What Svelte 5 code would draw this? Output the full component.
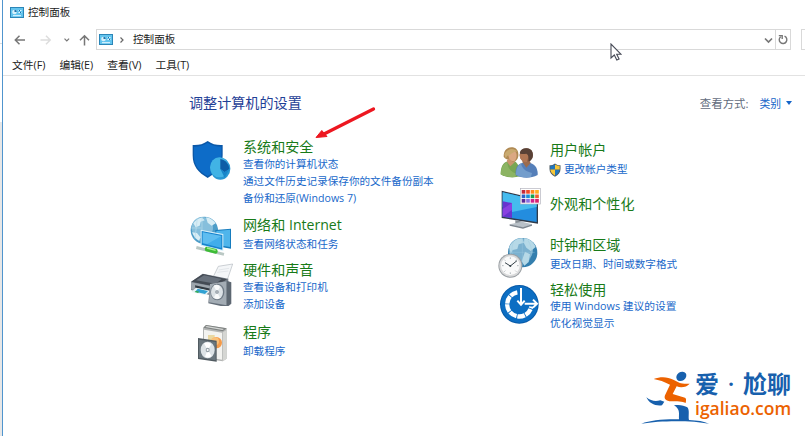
<script lang="ts">
  type Category = { icon: string; title: string; links: string[]; shield?: boolean }

  const left: Category[] = [
    { icon: 'security', title: '系统和安全', links: ['查看你的计算机状态', '通过文件历史记录保存你的文件备份副本', '备份和还原(Windows 7)'] },
    { icon: 'network', title: '网络和 Internet', links: ['查看网络状态和任务'] },
    { icon: 'hardware', title: '硬件和声音', links: ['查看设备和打印机', '添加设备'] },
    { icon: 'programs', title: '程序', links: ['卸载程序'] },
  ]
  const right: Category[] = [
    { icon: 'users', title: '用户帐户', links: ['更改帐户类型'], shield: true },
    { icon: 'appearance', title: '外观和个性化', links: [] },
    { icon: 'clock', title: '时钟和区域', links: ['更改日期、时间或数字格式'] },
    { icon: 'ease', title: '轻松使用', links: ['使用 Windows 建议的设置', '优化视觉显示'] },
  ]
  const menus = ['文件(F)', '编辑(E)', '查看(V)', '工具(T)']
  const swatches = ['#c22a3c', '#f04a28', '#ff8a1c', '#ffb01e', '#2a62c8', '#1890d8', '#16a050', '#f06030', '#5a2898', '#8a70e0', '#d0208c', '#d8206c']
  const viewBoxes: Record<string, string> = {
    security: '30 147 132 132',
    network: '30 12 132 132',
    hardware: '30 156 132 132',
    programs: '30 330 132 132',
    users: '21 21 132 132',
    appearance: '21 150 132 132',
    clock: '21 9 132 132',
    ease: '21 153 132 132',
  }
</script>

{#snippet panelIcon()}
  <svg class="panel-icon" viewBox="0 0 14 11">
    <rect x=".5" y=".5" width="13" height="10" fill="#62c4ee" stroke="#2b86b8" />
    <circle cx="4.5" cy="5" r="2.3" fill="#d9f1fb" />
    <path d="M4.5 5V2.7A2.3 2.3 0 0 1 6.8 5z" fill="#2372a8" />
    <path d="M8.5 3.5h3M8.5 5.5h3M3 8.7h8" stroke="#e9f8ff" />
    <path d="M9 3.5h1M10 5.5h1" stroke="#1d6ca4" />
  </svg>
{/snippet}

{#snippet categoryIcon(name: string)}
  <svg class="icon {name}" viewBox={viewBoxes[name]}>
    {#if name === 'security'}
      <path d="M83 153C70 163 54 166 38 165v31c0 33 17 52 45 68 28-16 45-35 45-68v-31c-16 1-32-2-45-12z" fill="#0b58a8" />
      <path d="M83 158c-12 8-26 12-41 12v27c0 29 15 46 41 61 26-15 41-32 41-61v-27c-15 0-29-4-41-12z" fill="#0d6cc8" />
      <ellipse cx="121" cy="236" rx="30" ry="33" fill="#2797d3" />
      <ellipse cx="118" cy="232" rx="28" ry="30" fill="#41b3e5" />
      <path d="M121 237V207c16 3 26 15 27 30l-14 10z" fill="#0c5da6" />
      <path d="M121 237l13 9 14-9-14 26z" fill="#1685c9" />
    {:else if name === 'network'}
      <circle cx="73" cy="61" r="41" fill="#4d9dc8" />
      <circle cx="67" cy="53" r="32" fill="#86bfdc" />
      <path d="M40 40c7-10 15-16 26-17l8 8-12 4-3 12-12 5zM78 22c12 1 22 8 29 18l-12 7-12-9zM36 67l15 2 10 13-3 11c-10-5-18-14-22-26z" fill="#d7edf5" />
      <path d="M34 54h30M52 24l-7 62M66 20v40" stroke="#b8dceb" stroke-width="2" />
      <path d="M106 60l47-4v60l-47-8z" fill="#167cbe" />
      <path d="M109 63l41-4v52l-41-7z" fill="#4fb5eb" />
      <path d="M62 59l68 13v51l-68-16z" fill="#d8f0fa" />
      <path d="M65 63l62 12v44l-62-15z" fill="#1683cd" />
      <path d="M68 67l56 11v36l-56-14z" fill="#41adeb" />
      <path d="M68 67l56 11-42 24-14-3z" fill="#77caf4" opacity=".55" />
      <path d="M50 108l83 21-2 8-83-20z" fill="#bac8c4" />
      <path d="M80 110l29 7c6 3 5 14-2 14l-29-7c-6-4-4-14 2-14z" fill="#3dbc36" />
      <path d="M81 114l26 7" stroke="#a8ef91" stroke-width="4" />
    {:else if name === 'hardware'}
      <path d="M98 204l17-35 43-7-17 50z" fill="#f4f6f8" stroke="#b4bac0" stroke-width="2" />
      <path d="M116 180l31-5m-35 12l33-4" stroke="#d9dee2" stroke-width="2" />
      <path d="M33 216l35-25 77 15v38l-37 16-75-20z" fill="#777f89" />
      <path d="M33 215l36-23 72 16-33 22z" fill="#444b54" />
      <path d="M48 211l24-15 53 11-18 14z" fill="#69727d" />
      <path d="M33 217l74 14v25l-73-18z" fill="#9da5ac" />
      <path d="M45 226l51 11v8l-50-12z" fill="#333b43" />
      <path d="M48 233l43 9-14 14-43-10z" fill="#e8f3f6" />
      <path d="M53 236l31 7-9 9-29-7z" fill="#31a1d2" />
      <path d="M48 242l10 3-4 4-10-3z" fill="#36ab58" />
      <path d="M90 223l50-11 14 5v64l-13 11-56-12z" fill="#646e79" />
      <path d="M90 222l50-8v72l-53-9z" fill="#a3acb4" />
      <path d="M140 214l13 4v60l-13 10z" fill="#5d6771" />
      <ellipse cx="112" cy="246" rx="21" ry="25" fill="#707b86" />
      <ellipse cx="111" cy="246" rx="18" ry="22" fill="#dce2e6" />
      <path d="M111 246l-10-19c7-5 15-3 19 4zM111 246l9 17c-6 6-13 5-18-1z" fill="#f9fafb" />
      <circle cx="111" cy="246" r="5" fill="#78838e" />
      <circle cx="111" cy="246" r="2" fill="#fff" />
    {:else if name === 'programs'}
      <path d="M69 354l9-9 62 10v91l-12 8-59-9z" fill="#b3b5b4" />
      <path d="M72 359l54 9v81l-54-9z" fill="#f3f3f0" />
      <path d="M70 353l8-8 62 10-12 9z" fill="#7f8382" />
      <path d="M76 351l4-3 52 9-5 3z" fill="#d6d8d6" />
      <path d="M128 367l12-7v86l-12 8z" fill="#d5d6d3" />
      <path d="M84 375h20v18H84z" fill="#e9d8a1" />
      <circle cx="109" cy="398" r="17" fill="#f49b4a" />
      <circle cx="105" cy="394" r="12" fill="#f9c078" />
      <path d="M54 384l56 8v63l-56-8z" fill="#505a60" />
      <path d="M57 389l50 7v55l-50-8z" fill="#6b777e" />
      <ellipse cx="83" cy="420" rx="21" ry="25" fill="#dde3e6" />
      <path d="M83 420l-11-20c8-4 17-2 22 3zM83 420l12 18c-8 6-15 5-20 2z" fill="#fff" />
      <ellipse cx="83" cy="420" rx="6" ry="7" fill="#96a1a8" />
      <circle cx="83" cy="420" r="3" fill="#fff" />
    {:else if name === 'users'}
      <path d="M32 118c0-24 7-36 23-39l22 1c9 8 13 25 13 44-20 6-43 4-58-6z" fill="#78a653" />
      <path d="M32 118c2-19 7-31 20-37 0 17 9 29 28 35l-4 10c-18 1-33-1-44-8z" fill="#8cb463" />
      <path d="M50 79l11 15 14-13-5-11H54z" fill="#c9966e" />
      <path d="M41 65c0-18 9-28 23-28 15 0 23 10 21 27-2 10-7 15-14 17-6-1-11-5-12-11-5 5-11 4-18-5z" fill="#b08a54" />
      <path d="M55 56c9-1 14-5 18-9 9 7 9 20 1 31-11 3-19-7-19-22z" fill="#dba882" />
      <path d="M43 58c8-17 27-21 40-8-15-2-19 12-31 12l-5 8z" fill="#c9aa70" />
      <path d="M77 120c-2-22 7-35 22-37l22 1c16 4 23 19 22 36-21 11-46 11-66 0z" fill="#557fb9" />
      <path d="M78 119c0-16 4-27 15-34 3 16 14 25 33 29l-3 12c-17 2-32 1-45-7z" fill="#739dcc" />
      <path d="M97 81l12 17 13-14-6-12h-18z" fill="#9b6c4f" />
      <circle cx="109" cy="60" r="20" fill="#79523e" />
      <path d="M89 58c8 0 14-4 18-9l9 9-4 23c-14 3-24-8-23-23z" fill="#b07654" />
      <path d="M89 55c2-11 10-16 22-15 13 0 20 11 17 25-2 7-6 13-11 14 1-12-2-20-8-23-7 1-14 2-20-1z" fill="#594136" />
    {:else if name === 'appearance'}
      <path d="M35 167l109 26v73L35 249z" fill="#303b49" />
      <path d="M38 172l102 24v65L38 245z" fill="#238ddf" />
      <path d="M38 172l102 24v20L66 231 38 216z" fill="#45bbee" />
      <path d="M38 199l28 5v45l-28-4z" fill="#6834ce" />
      <path d="M38 222l28-18v21l-28 20z" fill="#8941e0" />
      <path d="M76 256l23 4-2 11-21-4z" fill="#889097" />
      <path d="M59 268l37-8 30 8-27 10z" fill="#b9c1c8" />
      <path d="M59 268l40 9 27-9v4l-27 9-40-9z" fill="#7c858e" />
      <rect x="91" y="160" width="60" height="47" fill="#fff" stroke="#b2b2bc" stroke-width="2" />
      {#each swatches as color, i}
        <rect x={95 + (i % 4) * 13.5} y={165 + Math.floor(i / 4) * 13.5} width="11" height="11" fill={color} />
      {/each}
    {:else if name === 'clock'}
      <circle cx="98" cy="62" r="44" fill="#347fae" />
      <circle cx="93" cy="54" r="36" fill="#7bb1cf" />
      <path d="M58 45c9-17 22-26 39-26l5 13-16 5-4 14-14 3-6 12zM103 18c16 2 29 13 34 27l-15 12-13-10-7-13zM105 59l15 8-4 23-13 11-8-13z" fill="#b6d9e7" />
      <path d="M56 61h78M71 29c-9 19-6 44 7 61M97 18v83M114 26c15 21 13 46-2 67" fill="none" stroke="#9cc9de" stroke-width="2" opacity=".6" />
      <circle cx="61" cy="101" r="36" fill="#9a9fa3" />
      <circle cx="61" cy="101" r="33" fill="#d8d9da" />
      <circle cx="61" cy="101" r="28" fill="#fafafa" />
      <path d="M61 76v5M61 121v5M36 101h5M81 101h5M43 83l3 3M76 116l3 3M79 83l-3 3M46 116l-3 3" stroke="#8e999f" stroke-width="2" />
      <path d="M45 92l16 10 20-16" fill="none" stroke="#37434a" stroke-width="3" />
      <circle cx="61" cy="102" r="3" fill="#37434a" />
    {:else}
      <circle cx="88" cy="217" r="58" fill="#0759a7" />
      <circle cx="88" cy="217" r="55" fill="#0c6ec3" />
      <path d="M82 181a36.5 36.5 0 1 0 42 42" fill="none" stroke="#fff" stroke-width="13" stroke-dasharray="23 2.5" />
      <path d="M93 166v47M102 215h36" fill="none" stroke="#0c6ec3" stroke-width="15" />
      <path d="M93 168v46M82 206l11 12 11-12M104 215h36M129 203l12 12-12 12" fill="none" stroke="#fff" stroke-width="6" />
    {/if}
  </svg>
{/snippet}

{#snippet column(items: Category[], side: string)}
  <div class="column {side}">
    {#each items as item}
      <section class="category {item.icon}">
        {@render categoryIcon(item.icon)}
        <div>
          <h2>{item.title}</h2>
          <div class="links">
            {#each item.links as link}
              <a href="#top">
                {#if item.shield}
                  <svg class="uac" viewBox="0 0 12 14">
                    <path d="M6 .4C4.5 1.7 2.5 2.2.5 2.2V6c0 3.7 2 5.8 5.5 7.7C9.5 11.8 11.5 9.7 11.5 6V2.2C9.5 2.2 7.5 1.7 6 .4z" fill="#4c5960" />
                    <path d="M6 1.6v5H1.3V3Q4 2.9 6 1.6zM6 6.6h4.6Q10.2 10.5 6 12.7z" fill="#2176bd" />
                    <path d="M6 1.6Q8 2.9 10.7 3v3.6H6zM1.3 6.6H6v6.1Q1.7 10.3 1.3 6.6z" fill="#f6c637" />
                  </svg>
                {/if}
                {link}
              </a>
            {/each}
          </div>
        </div>
      </section>
    {/each}
  </div>
{/snippet}

<div class="desktop">
  <div class="window">
    <header class="titlebar">{@render panelIcon()}<span>控制面板</span></header>
    <nav class="navbar">
      <svg class="arrows" viewBox="0 0 84 20" fill="none" stroke-width="1.5">
        <path d="M22 10H12.5M16.5 5.8L12.3 10l4.2 4.2" stroke="#777" />
        <path d="M37.5 10H47M43 5.8l4.2 4.2-4.2 4.2" stroke="#ddd" />
        <path d="M61.5 8.7l2.3 2.3 2.3-2.3" stroke="#777" stroke-width="1.2" />
        <path d="M81.5 15.5V5.8M77 10.2l4.5-4.5 4.5 4.5" stroke="#777" />
      </svg>
      <div class="address">
        {@render panelIcon()}
        <svg class="crumb" viewBox="0 0 6 8"><path d="M1.5 1.5L4 4 1.5 6.5" fill="none" stroke="#666" stroke-width="1.2" /></svg>
        <span>控制面板</span>
        <svg class="chevron" viewBox="0 0 9 7"><path d="M1 1.5l3.5 3.5L8 1.5" fill="none" stroke="#777" stroke-width="1.7" /></svg>
        <div class="refresh">
          <svg viewBox="0 0 10 11"><path d="M6.5 2.2A3.8 3.8 0 1 1 2.7 2.7M.8 1.6h3.4V5" fill="none" stroke="#777" stroke-width="1.4" /></svg>
        </div>
      </div>
      <div class="search"></div>
    </nav>
    <div class="menubar">
      {#each menus as menu}<span>{menu}</span>{/each}
    </div>
    <main>
      <div class="heading">
        <h1>调整计算机的设置</h1>
        <div class="view-by"><span>查看方式:</span><b>类别</b><i></i></div>
      </div>
      <div class="categories">
        {@render column(left, 'first')}
        {@render column(right, 'second')}
      </div>
    </main>
  </div>

  <svg class="pointer-arrow" viewBox="0 0 62 34">
    <path d="M58.5 3L9 28" stroke="#ed1720" stroke-width="3.3" stroke-linecap="round" />
    <path d="M1 31.5L6.8 24.5 12 30.5z" fill="#ed1720" stroke="#ed1720" stroke-linejoin="round" />
  </svg>
  <svg class="cursor" viewBox="0 0 12 18">
    <path d="M1 1v14l3.3-3 2.5 5 2.3-1-2.4-4.7h4.4z" fill="#fff" stroke="#474b57" stroke-width="1.1" />
  </svg>
  <div class="watermark">
    <svg viewBox="0 0 225 200">
      <ellipse cx="139" cy="49" rx="16" ry="13" transform="rotate(-35 139 49)" fill="#1760ad" />
      <path d="M56 57c20-8 42-7 59 2 15 8 24 14 49 12-9 10-25 14-39 8l-12 23 37 11c4 2 4 7 2 16-9-5-27-4-43-5-16 0-23-7-19-18l15-32c-18-9-32-14-49-17z" fill="#ec6200" />
      <path d="M34 112c14 11 27 13 42 9l12 4-7 11c-20 3-39-6-47-24z" fill="#1760ad" />
      <path d="M117 136c15-3 31 0 40 6 8 8 2 28 5 38 25 1 45 4 60 11-50-10-145-10-203 0 27-10 67-14 113-13-1-17 5-29-15-42z" fill="#1760ad" />
    </svg>
    <div class="brand"><strong>爱 · 尬聊</strong><span>igaliao.com</span></div>
  </div>
</div>

<style>
  :global(body) {
    margin: 0;
    overflow: hidden;
  }
  .desktop {
    position: relative;
    box-sizing: border-box;
    width: 805px;
    height: 436px;
    padding-left: 2px;
    overflow: hidden;
    background: linear-gradient(#fff 0 43px, #ddd 43px 44px, #fff 44px 122px, #e7e7e7 122px);
    font: 10.6px/17px "Open Sans", "Noto Sans CJK SC", sans-serif;
    color: #222;
  }
  .window {
    box-sizing: border-box;
    height: 436px;
    border-left: 1px solid #5095ce;
    background: #fff;
  }
  svg {
    display: block;
    flex: none;
  }
  h1, h2 {
    margin: 0;
    font-weight: 400;
    font-size: 14.1px;
    line-height: 18px;
    white-space: nowrap;
  }
  .panel-icon {
    width: 14px;
    height: 11px;
  }
  .titlebar {
    display: flex;
    align-items: center;
    gap: 4px;
    height: 24px;
    padding-left: 7px;
  }
  .navbar {
    display: flex;
    height: 30px;
    align-items: center;
  }
  .arrows {
    width: 84px;
    height: 20px;
    margin: 2px 9px 0 0;
    overflow: visible;
  }
  .address {
    display: flex;
    flex: none;
    align-items: center;
    box-sizing: border-box;
    width: 695px;
    height: 21px;
    margin-top: 1px;
    padding-left: 2px;
    border: 1px solid #d9d9d9;
  }
  .crumb {
    width: 6px;
    height: 8px;
    margin: 0 8px 0 6px;
  }
  .chevron {
    width: 9px;
    height: 7px;
    margin: 1px 2px 0 auto;
  }
  .refresh {
    display: flex;
    align-items: center;
    justify-content: center;
    width: 14px;
    height: 19px;
    border-left: 1px solid #d9d9d9;
  }
  .refresh svg {
    width: 10px;
    height: 11px;
  }
  .search {
    flex: none;
    width: 20px;
    height: 19px;
    margin: 1px 0 0 10px;
    border: 1px solid #d9d9d9;
  }
  .menubar {
    display: flex;
    box-sizing: border-box;
    height: 22px;
    gap: 14px;
    padding: 3px 0 0 9px;
    border-bottom: 1px solid #e2e2e2;
    font-size: 10.75px;
  }
  .heading {
    display: flex;
    justify-content: space-between;
    align-items: center;
    height: 54px;
    padding: 0 13px 0 186px;
  }
  h1 {
    color: #1f4096;
  }
  .view-by {
    display: flex;
    align-items: center;
    color: #626b7c;
    font-size: 11.4px;
  }
  .view-by b {
    margin-left: 11px;
    color: #1464c8;
    font-size: 10.8px;
    font-weight: 400;
  }
  .view-by i {
    margin-left: 5px;
    border: 3.5px solid transparent;
    border-top: 4px solid #1464c8;
    border-bottom: 0;
  }
  .categories {
    display: grid;
    grid-template-columns: 307px 1fr;
    padding: 8px 0 0 187px;
  }
  .column {
    display: grid;
    align-content: start;
  }
  .first {
    grid-template-rows: 78px 45px 62px 50px;
  }
  .second {
    grid-template-rows: 54px 41px 45px 50px;
    padding-top: 3px;
  }
  .category {
    display: flex;
    gap: 9px;
    min-height: 0;
  }
  h2 {
    color: #187a18;
  }
  a {
    display: flex;
    align-items: center;
    height: 17px;
    color: #1868ca;
    text-decoration: none;
    white-space: nowrap;
  }
  .network .links,
  .programs .links,
  .users .links,
  .clock .links {
    padding-top: 2px;
  }
  .ease .links {
    margin-top: -1px;
    font-size: 10.75px;
  }
  .icon {
    width: 44px;
    height: 44px;
    margin-top: 1px;
  }
  .icon.network {
    margin-top: -2px;
  }
  .icon.programs {
    margin-top: -3px;
  }
  .icon.appearance {
    margin-top: -10px;
  }
  .icon.clock {
    margin-top: -1px;
  }
  .icon.ease {
    margin-top: 2px;
  }
  .uac {
    width: 12px;
    height: 14px;
    margin: 0 3px 0 -1px;
  }
  .pointer-arrow {
    position: absolute;
    left: 315px;
    top: 106px;
    width: 62px;
    height: 34px;
  }
  .cursor {
    position: absolute;
    left: 610px;
    top: 43px;
    width: 12px;
    height: 18px;
  }
  .watermark {
    position: absolute;
    left: 635px;
    top: 360px;
    display: flex;
  }
  .watermark svg {
    width: 75px;
    height: 66.7px;
  }
  .brand {
    display: flex;
    flex-direction: column;
    margin-left: -15px;
    padding-top: 11px;
    white-space: nowrap;
  }
  .brand strong {
    color: #1760ad;
    font-size: 24px;
    font-weight: 600;
    line-height: 26px;
    word-spacing: 2.5px;
  }
  .brand span {
    color: #ec6200;
    font-size: 17.5px;
    font-weight: 600;
    line-height: 22px;
  }
</style>
